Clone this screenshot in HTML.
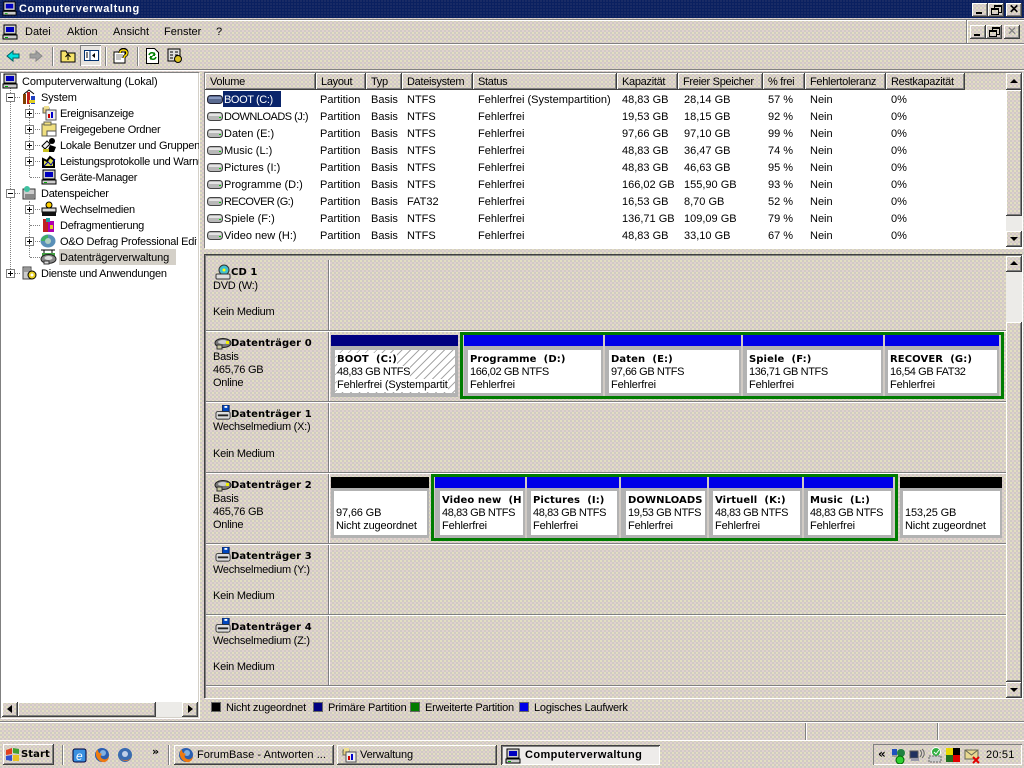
<!DOCTYPE html>
<html><head><meta charset="utf-8"><title>Computerverwaltung</title>
<style>
html,body{margin:0;padding:0;width:1024px;height:768px;overflow:hidden}
body{position:relative;font:11px/13px "Liberation Sans",sans-serif;color:#000;letter-spacing:-.15px;}
.d{background-color:#d0cac4;background-image:radial-gradient(circle at 1px 1px,#f4f0c0 .7px,transparent .9px),radial-gradient(circle at 3px 3px,#f0d8d8 .7px,transparent .9px);background-size:4px 4px,4px 4px}
.a{position:absolute}
.t{position:absolute;white-space:nowrap;margin-top:1px}
.b{font:bold 10px/13px "DejaVu Sans",sans-serif;letter-spacing:.1px}
.up{position:absolute;box-sizing:border-box;box-shadow:inset -1px -1px #404040,inset 1px 1px #fff,inset -2px -2px #808080;}
.th{position:absolute;box-sizing:border-box;top:73px;height:17px;box-shadow:inset -1px -1px #404040,inset 1px 1px #fff,inset -2px -2px #808080;padding:3px 0 0 5px;white-space:nowrap;overflow:hidden;letter-spacing:-.3px}
.r{position:absolute;left:205px;width:800px;height:17px;letter-spacing:0}
.r span{position:absolute;top:3px;white-space:nowrap}
.c1{left:19px}.c2{left:115px}.c3{left:166px}.c4{left:202px}.c5{left:273px}.c6{left:417px}.c7{left:479px}.c8{left:563px}.c9{left:605px}.c10{left:686px}
.r svg{position:absolute;left:2px;top:3px}
.hl{position:absolute;height:1px;background:#808080;box-shadow:0 1px #fff}
.vl{position:absolute;width:1px;background:#808080;box-shadow:1px 0 #fff}
.dh{position:absolute;height:0;border-top:1px dotted #808080}
.dv{position:absolute;width:0;border-left:1px dotted #808080}
.px{position:absolute;box-sizing:border-box;width:9px;height:9px;border:1px solid #808080;background:#fff}
.px:before{content:"";position:absolute;left:1px;top:3px;width:5px;height:1px;background:#000}
.px.p:after{content:"";position:absolute;left:3px;top:1px;width:1px;height:5px;background:#000}
.ph{position:absolute;height:11px}
.pw{position:absolute;box-sizing:border-box;background:#fff;overflow:hidden;white-space:nowrap}
.pf{position:absolute;background:#8a8a8a;background-image:radial-gradient(circle at 1px 1px,#d8d8d8 .7px,transparent .9px);background-size:2px 2px}
.pw i{display:block;font-style:normal;position:absolute;left:2px}
.l1{top:3px}.l2{top:16px;letter-spacing:-.4px}.l3{top:29px}
.g{position:absolute;box-sizing:border-box;border:3px solid #007c00;background:#d0cac4}
.leg{position:absolute;width:10px;height:10px;top:702px;border:1px solid #666;box-sizing:border-box}
.tri{position:absolute;width:0;height:0}
.ts{position:absolute;top:745px;height:20px;box-sizing:border-box;box-shadow:inset -1px -1px #404040,inset 1px 1px #fff,inset -2px -2px #808080;}
.lb{letter-spacing:-.25px}
svg{position:absolute;display:block}
</style></head>
<body class="d">
<svg width="0" height="0" style="left:0;top:0"><defs>
<symbol id="pc" viewBox="0 0 16 16"><rect x="2" y="1" width="12" height="9" fill="#ccc" stroke="#000"/><rect x="4" y="3" width="8" height="5" fill="#0000c0"/><rect x="1" y="11" width="14" height="4" fill="#ccc" stroke="#000"/><rect x="3" y="13" width="3" height="1" fill="#0a0"/></symbol>
<symbol id="dr" viewBox="0 0 16 11"><rect x=".5" y="1.5" width="15" height="8" rx="3" fill="#b8b8b8" stroke="#444"/><rect x="2" y="3" width="12" height="2" fill="#e4e4e4"/><rect x="12" y="6" width="2" height="1" fill="#0c0"/></symbol>
<symbol id="ds" viewBox="0 0 18 14"><ellipse cx="9" cy="6" rx="8" ry="4.5" fill="#777" stroke="#222"/><ellipse cx="9" cy="5" rx="5" ry="2" fill="#ccc"/><rect x="3" y="8" width="5" height="4" fill="#c8c8a0" stroke="#333"/><rect x="12" y="4" width="3" height="3" fill="#ee0"/></symbol>
<symbol id="rm" viewBox="0 0 18 17"><rect x="8" y="0" width="7" height="7" fill="#0048c0" stroke="#002060"/><rect x="10" y="1" width="3" height="2" fill="#fff"/><rect x="1" y="7" width="15" height="8" rx="2" fill="#ddd" stroke="#333"/><rect x="3" y="10" width="11" height="2" fill="#222"/></symbol>
<symbol id="ff" viewBox="0 0 16 16"><circle cx="8" cy="8" r="7" fill="#2a5fb0"/><circle cx="9" cy="6" r="3" fill="#7fb0e0"/><path d="M2 5C1 11 6 16 11 15c3-1 4-4 4-6-1 3-4 4-6 3C6 11 6 8 8 7 6 6 4 6 4 3 3 3 2 4 2 5z" fill="#ee7a10"/></symbol>
<symbol id="fl" viewBox="0 0 16 16"><path d="M2 3h6v5H2z" fill="#e8d080" stroke="#665" /><path d="M3 1h5v3H3z" fill="#f0e090"/><rect x="5" y="5" width="10" height="10" fill="#eee" stroke="#555"/><rect x="7" y="9" width="2" height="4" fill="#c00"/><rect x="10" y="7" width="2" height="6" fill="#00c"/></symbol>
<symbol id="gr" viewBox="0 0 16 16"><path d="M2 14V6l4 2 3-4 4 3v7z" stroke="#000" fill="#dde04a" stroke-width="2"/><path d="M3 13l4-4 3 3 4-6" stroke="#00a" fill="none"/></symbol>
</defs></svg>

<!-- title bar -->
<div class="a" style="left:0;top:0;width:1024px;height:18px;background-color:#0a2060;background-image:radial-gradient(circle at 1px 1px,#26356a .7px,transparent .9px);background-size:3px 3px"></div>
<svg style="left:2px;top:1px" width="15" height="15"><use href="#pc"/></svg>
<div class="t" style="left:19px;top:2px;color:#fff;font-weight:bold;letter-spacing:.6px">Computerverwaltung</div>
<div class="up d" style="left:972px;top:3px;width:16px;height:14px"></div><div class="a" style="left:976px;top:12px;width:6px;height:2px;background:#000"></div>
<div class="up d" style="left:988px;top:3px;width:16px;height:14px"></div><div class="a" style="left:994px;top:5px;width:6px;height:5px;border:1px solid #000;border-top-width:2px"></div><div class="a d" style="left:991px;top:8px;width:6px;height:4px;border:1px solid #000;border-top-width:2px"></div>
<div class="up d" style="left:1006px;top:3px;width:16px;height:14px"></div><div class="t" style="left:1009px;top:2px;font-weight:bold;font-size:12px">✕</div>

<!-- menu -->
<div class="hl" style="left:0;top:19px;width:1024px"></div>
<svg style="left:2px;top:24px" width="16" height="16"><use href="#pc"/></svg>
<div class="t" style="left:25px;top:25px;letter-spacing:0">Datei</div>
<div class="t" style="left:67px;top:25px;letter-spacing:0">Aktion</div>
<div class="t" style="left:113px;top:25px;letter-spacing:0">Ansicht</div>
<div class="t" style="left:164px;top:25px;letter-spacing:0">Fenster</div>
<div class="t" style="left:216px;top:25px">?</div>
<div class="vl" style="left:966px;top:20px;height:23px"></div>
<div class="up d" style="left:970px;top:25px;width:16px;height:14px"></div><div class="a" style="left:974px;top:34px;width:6px;height:2px;background:#000"></div>
<div class="up d" style="left:986px;top:25px;width:16px;height:14px"></div><div class="a" style="left:992px;top:27px;width:6px;height:5px;border:1px solid #000;border-top-width:2px"></div><div class="a d" style="left:989px;top:30px;width:6px;height:4px;border:1px solid #000;border-top-width:2px"></div>
<div class="up d" style="left:1004px;top:25px;width:16px;height:14px"></div><div class="t" style="left:1007px;top:24px;font-size:12px;color:#808080">✕</div>

<!-- toolbar -->
<div class="hl" style="left:0;top:43px;width:1024px"></div>
<svg style="left:6px;top:49px" width="14" height="14"><path d="M1 7l6-5v3h6v4H7v3z" fill="#00e0e0" stroke="#006060"/></svg>
<svg style="left:29px;top:49px" width="14" height="14"><path d="M13 7L7 2v3H1v4h6v3z" fill="#a0a0a0" stroke="#888"/></svg>
<div class="vl" style="left:52px;top:47px;height:19px"></div>
<svg style="left:60px;top:48px" width="16" height="16"><path d="M1 3h5l1 2h8v9H1z" fill="#f6e36a" stroke="#000"/><path d="M8 12V7M5.500 9l2.500-3 2.500 3" stroke="#000" fill="none"/></svg>
<div class="a" style="left:80px;top:45px;width:21px;height:21px;box-sizing:border-box;background:#e6e3df;box-shadow:inset 1px 1px #808080,inset -1px -1px #fff"></div>
<svg style="left:84px;top:50px" width="15" height="12"><rect x=".5" y=".5" width="14" height="10" fill="#fff" stroke="#003070"/><path d="M6 0v11" stroke="#003070"/><path d="M2 3h2M2 5h2M2 7h2" stroke="#000"/><path d="M11 3v5l-3-2.500z" fill="#000"/></svg>
<div class="vl" style="left:105px;top:47px;height:19px"></div>
<svg style="left:113px;top:48px" width="16" height="16"><rect x="1" y="4" width="11" height="11" fill="#fff" stroke="#000"/><path d="M3 7h7M3 9h7M3 11h5" stroke="#888"/><path d="M7 5c0-5 7-5 7 0 0 3-3 2-3 5" stroke="#000" stroke-width="3" fill="none"/><path d="M7 5c0-4 7-4 7 0 0 3-3 2-3 5" stroke="#ffe000" stroke-width="1.500" fill="none"/></svg>
<div class="vl" style="left:137px;top:47px;height:19px"></div>
<svg style="left:146px;top:48px" width="13" height="16"><path d="M.5 .5h8l4 4v11H.5z" fill="#fff" stroke="#000"/><path d="M3 7c1-3 5-3 6 0M10 9c-1 3-5 3-6 0" stroke="#008000" stroke-width="1.500" fill="none"/><path d="M9 4v4H6zM4 12V8h3z" fill="#008000"/></svg>
<svg style="left:167px;top:48px" width="16" height="16"><rect x="1" y="1" width="12" height="12" fill="#ddd" stroke="#000"/><path d="M3 4h3M8 4h3M3 7h3M8 7h3M3 10h3" stroke="#000"/><circle cx="11" cy="11" r="3.500" fill="#d8c020" stroke="#000"/></svg>
<div class="hl" style="left:0;top:69px;width:1024px"></div>

<!-- left pane -->
<div class="a" style="left:0;top:72px;width:199px;height:646px;background:#fff;box-shadow:inset 1px 1px #808080,inset -1px -1px #d4d0c8,1px 1px #fff"></div>
<div class="dv" style="left:10px;top:88px;height:185px"></div>
<div class="dv" style="left:29px;top:105px;height:72px"></div>
<div class="dv" style="left:29px;top:201px;height:56px"></div>
<div class="dh" style="left:11px;top:97px;width:9px"></div>
<div class="dh" style="left:30px;top:113px;width:10px"></div><div class="dh" style="left:30px;top:129px;width:10px"></div><div class="dh" style="left:30px;top:145px;width:10px"></div><div class="dh" style="left:30px;top:161px;width:10px"></div><div class="dh" style="left:30px;top:177px;width:10px"></div>
<div class="dh" style="left:11px;top:193px;width:9px"></div>
<div class="dh" style="left:30px;top:209px;width:10px"></div><div class="dh" style="left:30px;top:225px;width:10px"></div><div class="dh" style="left:30px;top:241px;width:10px"></div><div class="dh" style="left:30px;top:257px;width:10px"></div>
<div class="dh" style="left:11px;top:273px;width:9px"></div>

<div class="px" style="left:6px;top:93px"></div>
<div class="px p" style="left:25px;top:109px"></div><div class="px p" style="left:25px;top:125px"></div><div class="px p" style="left:25px;top:141px"></div><div class="px p" style="left:25px;top:157px"></div>
<div class="px" style="left:6px;top:189px"></div>
<div class="px p" style="left:25px;top:205px"></div><div class="px p" style="left:25px;top:237px"></div>
<div class="px p" style="left:6px;top:269px"></div>

<svg style="left:2px;top:73px" width="16" height="16"><use href="#pc"/></svg>
<svg style="left:21px;top:89px" width="16" height="16"><rect x="2" y="5" width="3" height="10" fill="#804000"/><rect x="6" y="3" width="3" height="12" fill="#c02020"/><rect x="10" y="7" width="4" height="8" fill="#2040c0"/><path d="M3 5l5-4 5 4" stroke="#000" fill="none"/><rect x="8" y="11" width="6" height="3" fill="#e0d020"/></svg>
<svg style="left:41px;top:105px" width="16" height="16"><use href="#fl"/></svg>
<svg style="left:41px;top:121px" width="16" height="16"><rect x="1" y="3" width="14" height="12" fill="#f0e080" stroke="#665"/><rect x="3" y="1" width="7" height="3" fill="#f0e080" stroke="#665"/><rect x="6" y="10" width="9" height="5" fill="#fff" stroke="#555"/></svg>
<svg style="left:41px;top:137px" width="16" height="16"><circle cx="11" cy="4" r="3" fill="#000"/><path d="M6 15l3-7 6 2-2 5z" fill="#000"/><path d="M1 9l5-5 3 3-5 5z" fill="#f0f0f0" stroke="#000"/><rect x="2" y="12" width="6" height="3" fill="#c8c020"/></svg>
<svg style="left:41px;top:153px" width="16" height="16"><use href="#gr"/></svg>
<svg style="left:41px;top:169px" width="16" height="16"><use href="#pc"/></svg>
<svg style="left:21px;top:185px" width="16" height="16"><path d="M2 4h12v10H2z" fill="#ccc" stroke="#333"/><circle cx="6" cy="4" r="3" fill="#40c0a0"/><rect x="4" y="9" width="9" height="4" fill="#888"/></svg>
<svg style="left:41px;top:201px" width="16" height="16"><circle cx="8" cy="4" r="3" fill="#ffd000" stroke="#000"/><rect x="1" y="7" width="14" height="4" fill="#ddd" stroke="#000"/><rect x="1" y="11" width="14" height="4" fill="#111"/></svg>
<svg style="left:41px;top:217px" width="16" height="16"><rect x="2" y="2" width="5" height="13" fill="#c02020"/><rect x="7" y="4" width="6" height="11" fill="#b000b0"/><rect x="5" y="1" width="4" height="4" fill="#20a0a0"/><rect x="9" y="8" width="3" height="4" fill="#e0d020"/></svg>
<svg style="left:40px;top:233px" width="16" height="16"><ellipse cx="8" cy="8" rx="7.500" ry="6.500" fill="#5a90b8"/><circle cx="8" cy="8" r="3" fill="#b0d0c0"/><path d="M1 8a7 6 0 0 1 7-6v3a3 3 0 0 0-3 3z" fill="#40b060"/></svg>
<svg style="left:40px;top:249px" width="17" height="16"><path d="M1 1h14M4 1v4M12 1v4" stroke="#000"/><rect x="2" y="4" width="13" height="3" fill="#40a040"/><ellipse cx="8.500" cy="10" rx="7.500" ry="4.500" fill="#888" stroke="#222"/><ellipse cx="8.500" cy="9" rx="4" ry="2" fill="#ddd"/><rect x="4" y="12" width="5" height="3" fill="#ddd" stroke="#333"/></svg>
<svg style="left:21px;top:265px" width="16" height="16"><rect x="2" y="2" width="8" height="12" fill="#ccc" stroke="#444"/><path d="M3 4h6M3 6h6" stroke="#666"/><circle cx="11" cy="10" r="4" fill="#e8d020" stroke="#000"/><circle cx="11" cy="10" r="1.500" fill="#fff"/></svg>

<div class="t" style="left:22px;top:75px;letter-spacing:-.1px">Computerverwaltung (Lokal)</div>
<div class="t" style="left:41px;top:91px">System</div>
<div class="t" style="left:60px;top:107px;letter-spacing:-.3px">Ereignisanzeige</div>
<div class="t" style="left:60px;top:123px;letter-spacing:-.25px">Freigegebene Ordner</div>
<div class="t" style="left:60px;top:139px;width:139px;overflow:hidden;letter-spacing:-.25px">Lokale Benutzer und Gruppen</div>
<div class="t" style="left:60px;top:155px;width:139px;overflow:hidden;letter-spacing:-.25px">Leistungsprotokolle und Warnungen</div>
<div class="t" style="left:60px;top:171px;letter-spacing:-.25px">Geräte-Manager</div>
<div class="t" style="left:41px;top:187px;letter-spacing:-.25px">Datenspeicher</div>
<div class="t" style="left:60px;top:203px;letter-spacing:-.25px">Wechselmedien</div>
<div class="t" style="left:60px;top:219px;letter-spacing:-.25px">Defragmentierung</div>
<div class="t" style="left:60px;top:235px;width:137px;overflow:hidden;letter-spacing:-.25px">O&amp;O Defrag Professional Edition</div>
<div class="a" style="left:59px;top:249px;width:117px;height:16px;background:#d4d0c8"></div>
<div class="t" style="left:60px;top:251px;letter-spacing:-.1px">Datenträgerverwaltung</div>
<div class="t" style="left:41px;top:267px;letter-spacing:-.25px">Dienste und Anwendungen</div>

<!-- left hscroll -->
<div class="a" style="left:2px;top:702px;width:196px;height:15px;background:#ecebe8"></div>
<div class="up d" style="left:2px;top:702px;width:16px;height:15px"></div><div class="tri" style="left:7px;top:705px;border:4px solid transparent;border-left:0;border-right:5px solid #000"></div>
<div class="up d" style="left:18px;top:702px;width:138px;height:15px"></div>
<div class="up d" style="left:182px;top:702px;width:16px;height:15px"></div><div class="tri" style="left:188px;top:705px;border:4px solid transparent;border-right:0;border-left:5px solid #000"></div>

<!-- upper list -->
<div class="a" style="left:204px;top:72px;width:818px;height:176px;background:#fff;box-shadow:inset 1px 1px #808080,1px 1px #fff"></div>
<div class="a d" style="left:205px;top:73px;width:801px;height:17px"></div>
<div class="th d" style="left:205px;width:111px">Volume</div>
<div class="th d" style="left:316px;width:50px">Layout</div>
<div class="th d" style="left:366px;width:36px">Typ</div>
<div class="th d" style="left:402px;width:71px">Dateisystem</div>
<div class="th d" style="left:473px;width:144px">Status</div>
<div class="th d" style="left:617px;width:61px">Kapazität</div>
<div class="th d" style="left:678px;width:85px">Freier Speicher</div>
<div class="th d" style="left:763px;width:42px">% frei</div>
<div class="th d" style="left:805px;width:81px">Fehlertoleranz</div>
<div class="th d" style="left:886px;width:79px">Restkapazität</div>

<div class="a" style="left:223px;top:91px;width:58px;height:16px;background:#0a246a"></div>
<div class="r" style="top:91px"><svg width="16" height="11"><rect x=".5" y="1.5" width="15" height="8" rx="3" fill="#5a6a90" stroke="#223"/><rect x="2" y="3" width="12" height="2" fill="#8a9ac0"/></svg><span class="c1" style="color:#fff;letter-spacing:-.4px">BOOT (C:)</span><span class="c2">Partition</span><span class="c3">Basis</span><span class="c4">NTFS</span><span class="c5">Fehlerfrei (Systempartition)</span><span class="c6">48,83 GB</span><span class="c7">28,14 GB</span><span class="c8">57 %</span><span class="c9">Nein</span><span class="c10">0%</span></div>
<div class="r" style="top:108px"><svg width="16" height="11"><use href="#dr"/></svg><span class="c1" style="letter-spacing:-.5px">DOWNLOADS (J:)</span><span class="c2">Partition</span><span class="c3">Basis</span><span class="c4">NTFS</span><span class="c5">Fehlerfrei</span><span class="c6">19,53 GB</span><span class="c7">18,15 GB</span><span class="c8">92 %</span><span class="c9">Nein</span><span class="c10">0%</span></div>
<div class="r" style="top:125px"><svg width="16" height="11"><use href="#dr"/></svg><span class="c1">Daten (E:)</span><span class="c2">Partition</span><span class="c3">Basis</span><span class="c4">NTFS</span><span class="c5">Fehlerfrei</span><span class="c6">97,66 GB</span><span class="c7">97,10 GB</span><span class="c8">99 %</span><span class="c9">Nein</span><span class="c10">0%</span></div>
<div class="r" style="top:142px"><svg width="16" height="11"><use href="#dr"/></svg><span class="c1">Music (L:)</span><span class="c2">Partition</span><span class="c3">Basis</span><span class="c4">NTFS</span><span class="c5">Fehlerfrei</span><span class="c6">48,83 GB</span><span class="c7">36,47 GB</span><span class="c8">74 %</span><span class="c9">Nein</span><span class="c10">0%</span></div>
<div class="r" style="top:159px"><svg width="16" height="11"><use href="#dr"/></svg><span class="c1">Pictures (I:)</span><span class="c2">Partition</span><span class="c3">Basis</span><span class="c4">NTFS</span><span class="c5">Fehlerfrei</span><span class="c6">48,83 GB</span><span class="c7">46,63 GB</span><span class="c8">95 %</span><span class="c9">Nein</span><span class="c10">0%</span></div>
<div class="r" style="top:176px"><svg width="16" height="11"><use href="#dr"/></svg><span class="c1">Programme (D:)</span><span class="c2">Partition</span><span class="c3">Basis</span><span class="c4">NTFS</span><span class="c5">Fehlerfrei</span><span class="c6">166,02 GB</span><span class="c7">155,90 GB</span><span class="c8">93 %</span><span class="c9">Nein</span><span class="c10">0%</span></div>
<div class="r" style="top:193px"><svg width="16" height="11"><use href="#dr"/></svg><span class="c1" style="letter-spacing:-.6px">RECOVER (G:)</span><span class="c2">Partition</span><span class="c3">Basis</span><span class="c4">FAT32</span><span class="c5">Fehlerfrei</span><span class="c6">16,53 GB</span><span class="c7">8,70 GB</span><span class="c8">52 %</span><span class="c9">Nein</span><span class="c10">0%</span></div>
<div class="r" style="top:210px"><svg width="16" height="11"><use href="#dr"/></svg><span class="c1">Spiele (F:)</span><span class="c2">Partition</span><span class="c3">Basis</span><span class="c4">NTFS</span><span class="c5">Fehlerfrei</span><span class="c6">136,71 GB</span><span class="c7">109,09 GB</span><span class="c8">79 %</span><span class="c9">Nein</span><span class="c10">0%</span></div>
<div class="r" style="top:227px"><svg width="16" height="11"><use href="#dr"/></svg><span class="c1">Video new (H:)</span><span class="c2">Partition</span><span class="c3">Basis</span><span class="c4">NTFS</span><span class="c5">Fehlerfrei</span><span class="c6">48,83 GB</span><span class="c7">33,10 GB</span><span class="c8">67 %</span><span class="c9">Nein</span><span class="c10">0%</span></div>

<!-- list scrollbar -->
<div class="a" style="left:1006px;top:73px;width:16px;height:174px;background:#ecebe8"></div>
<div class="up d" style="left:1006px;top:73px;width:16px;height:17px"></div><div class="tri" style="left:1010px;top:79px;border:4px solid transparent;border-top:0;border-bottom:4px solid #000"></div>
<div class="up d" style="left:1006px;top:90px;width:16px;height:126px"></div>
<div class="up d" style="left:1006px;top:231px;width:16px;height:16px"></div><div class="tri" style="left:1010px;top:237px;border:4px solid transparent;border-bottom:0;border-top:4px solid #000"></div>

<!-- lower pane -->
<div class="a" style="left:204px;top:254px;width:818px;height:444px;box-shadow:inset 1px 1px #404040,inset 2px 2px #808080,1px 1px #fff"></div>
<div class="vl" style="left:328px;top:260px;height:425px"></div>
<div class="hl" style="left:206px;top:330px;width:800px"></div>
<div class="hl" style="left:206px;top:401px;width:800px"></div>
<div class="hl" style="left:206px;top:472px;width:800px"></div>
<div class="hl" style="left:206px;top:543px;width:800px"></div>
<div class="hl" style="left:206px;top:614px;width:800px"></div>
<div class="hl" style="left:206px;top:685px;width:800px"></div>

<div class="a" style="left:1006px;top:256px;width:16px;height:441px;background:#ecebe8"></div>
<div class="up d" style="left:1006px;top:256px;width:16px;height:16px"></div><div class="tri" style="left:1010px;top:261px;border:4px solid transparent;border-top:0;border-bottom:4px solid #000"></div>
<div class="up d" style="left:1006px;top:322px;width:16px;height:360px"></div>
<div class="up d" style="left:1006px;top:682px;width:16px;height:16px"></div><div class="tri" style="left:1010px;top:688px;border:4px solid transparent;border-bottom:0;border-top:4px solid #000"></div>

<!-- disk labels -->
<svg style="left:215px;top:264px" width="16" height="16"><circle cx="9" cy="6" r="5" fill="#40c0d0" stroke="#333"/><circle cx="9" cy="6" r="1.500" fill="#ff0"/><rect x="1" y="10" width="14" height="5" rx="1" fill="#ddd" stroke="#333"/></svg>
<div class="t b" style="left:231px;top:265px">CD 1</div>
<div class="t lb" style="left:213px;top:279px">DVD (W:)</div>
<div class="t lb" style="left:213px;top:305px">Kein Medium</div>

<svg style="left:214px;top:337px" width="18" height="14"><use href="#ds"/></svg>
<div class="t b" style="left:231px;top:336px">Datenträger 0</div>
<div class="t lb" style="left:213px;top:350px">Basis</div>
<div class="t lb" style="left:213px;top:363px">465,76 GB</div>
<div class="t lb" style="left:213px;top:376px">Online</div>

<svg style="left:215px;top:405px" width="17" height="16"><use href="#rm"/></svg>
<div class="t b" style="left:231px;top:407px">Datenträger 1</div>
<div class="t lb" style="left:213px;top:420px">Wechselmedium (X:)</div>
<div class="t lb" style="left:213px;top:447px">Kein Medium</div>

<svg style="left:214px;top:479px" width="18" height="14"><use href="#ds"/></svg>
<div class="t b" style="left:231px;top:478px">Datenträger 2</div>
<div class="t lb" style="left:213px;top:492px">Basis</div>
<div class="t lb" style="left:213px;top:505px">465,76 GB</div>
<div class="t lb" style="left:213px;top:518px">Online</div>

<svg style="left:215px;top:547px" width="17" height="16"><use href="#rm"/></svg>
<div class="t b" style="left:231px;top:549px">Datenträger 3</div>
<div class="t lb" style="left:213px;top:563px">Wechselmedium (Y:)</div>
<div class="t lb" style="left:213px;top:589px">Kein Medium</div>

<svg style="left:215px;top:618px" width="17" height="16"><use href="#rm"/></svg>
<div class="t b" style="left:231px;top:620px">Datenträger 4</div>
<div class="t lb" style="left:213px;top:634px">Wechselmedium (Z:)</div>
<div class="t lb" style="left:213px;top:660px">Kein Medium</div>

<!-- disk 0 -->
<div class="ph" style="left:331px;top:335px;width:127px;background:#000080"></div>
<div class="pf" style="left:331px;top:346px;width:127px;height:51px"></div>
<div class="pw" style="left:335px;top:350px;width:120px;height:43px;background:repeating-linear-gradient(135deg,#fff 0,#fff 5px,#a8a8a8 5px,#a8a8a8 6px)">
<i class="l1 b" style="background:#fff">BOOT&nbsp; (C:)</i><i class="l2" style="background:#fff">48,83 GB NTFS</i><i class="l3" style="background:#fff">Fehlerfrei (Systempartit</i></div>

<div class="g" style="left:460px;top:332px;width:544px;height:67px"></div>
<div class="ph" style="left:464px;top:335px;width:139px;background:#0000e8"></div>
<div class="pf" style="left:464px;top:346px;width:139px;height:50px"></div>
<div class="pw" style="left:468px;top:350px;width:133px;height:43px"><i class="l1 b">Programme&nbsp; (D:)</i><i class="l2">166,02 GB NTFS</i><i class="l3">Fehlerfrei</i></div>
<div class="ph" style="left:605px;top:335px;width:136px;background:#0000e8"></div>
<div class="pf" style="left:605px;top:346px;width:136px;height:50px"></div>
<div class="pw" style="left:609px;top:350px;width:130px;height:43px"><i class="l1 b">Daten&nbsp; (E:)</i><i class="l2">97,66 GB NTFS</i><i class="l3">Fehlerfrei</i></div>
<div class="ph" style="left:743px;top:335px;width:140px;background:#0000e8"></div>
<div class="pf" style="left:743px;top:346px;width:140px;height:50px"></div>
<div class="pw" style="left:747px;top:350px;width:134px;height:43px"><i class="l1 b">Spiele&nbsp; (F:)</i><i class="l2">136,71 GB NTFS</i><i class="l3">Fehlerfrei</i></div>
<div class="ph" style="left:885px;top:335px;width:114px;background:#0000e8"></div>
<div class="pf" style="left:885px;top:346px;width:114px;height:50px"></div>
<div class="pw" style="left:888px;top:350px;width:109px;height:43px"><i class="l1 b">RECOVER&nbsp; (G:)</i><i class="l2">16,54 GB FAT32</i><i class="l3">Fehlerfrei</i></div>

<!-- disk 2 -->
<div class="ph" style="left:331px;top:477px;width:98px;background:#000"></div>
<div class="pf" style="left:331px;top:488px;width:98px;height:50px"></div>
<div class="pw" style="left:334px;top:491px;width:93px;height:44px"><i class="l2" style="letter-spacing:-.15px">97,66 GB</i><i class="l3">Nicht zugeordnet</i></div>

<div class="g" style="left:431px;top:474px;width:467px;height:67px"></div>
<div class="ph" style="left:435px;top:477px;width:90px;background:#0000e8"></div>
<div class="pf" style="left:435px;top:488px;width:90px;height:50px"></div>
<div class="pw" style="left:440px;top:491px;width:83px;height:44px"><i class="l1 b">Video new&nbsp; (H</i><i class="l2">48,83 GB NTFS</i><i class="l3">Fehlerfrei</i></div>
<div class="ph" style="left:527px;top:477px;width:92px;background:#0000e8"></div>
<div class="pf" style="left:527px;top:488px;width:92px;height:50px"></div>
<div class="pw" style="left:531px;top:491px;width:86px;height:44px"><i class="l1 b">Pictures&nbsp; (I:)</i><i class="l2">48,83 GB NTFS</i><i class="l3">Fehlerfrei</i></div>
<div class="ph" style="left:621px;top:477px;width:86px;background:#0000e8"></div>
<div class="pf" style="left:621px;top:488px;width:86px;height:50px"></div>
<div class="pw" style="left:626px;top:491px;width:79px;height:44px"><i class="l1 b">DOWNLOADS</i><i class="l2">19,53 GB NTFS</i><i class="l3">Fehlerfrei</i></div>
<div class="ph" style="left:709px;top:477px;width:93px;background:#0000e8"></div>
<div class="pf" style="left:709px;top:488px;width:93px;height:50px"></div>
<div class="pw" style="left:713px;top:491px;width:87px;height:44px"><i class="l1 b">Virtuell&nbsp; (K:)</i><i class="l2">48,83 GB NTFS</i><i class="l3">Fehlerfrei</i></div>
<div class="ph" style="left:804px;top:477px;width:89px;background:#0000e8"></div>
<div class="pf" style="left:804px;top:488px;width:89px;height:50px"></div>
<div class="pw" style="left:808px;top:491px;width:83px;height:44px"><i class="l1 b">Music&nbsp; (L:)</i><i class="l2">48,83 GB NTFS</i><i class="l3">Fehlerfrei</i></div>

<div class="ph" style="left:900px;top:477px;width:102px;background:#000"></div>
<div class="pf" style="left:900px;top:488px;width:102px;height:50px"></div>
<div class="pw" style="left:903px;top:491px;width:97px;height:44px"><i class="l2" style="letter-spacing:-.15px">153,25 GB</i><i class="l3">Nicht zugeordnet</i></div>

<!-- legend -->
<div class="leg" style="left:211px;background:#000"></div><div class="t" style="left:226px;top:701px;letter-spacing:-.2px">Nicht zugeordnet</div>
<div class="leg" style="left:313px;background:#000080"></div><div class="t" style="left:328px;top:701px;letter-spacing:-.2px">Primäre Partition</div>
<div class="leg" style="left:410px;background:#007c00"></div><div class="t" style="left:425px;top:701px;letter-spacing:-.2px">Erweiterte Partition</div>
<div class="leg" style="left:519px;background:#0000e8"></div><div class="t" style="left:534px;top:701px;letter-spacing:-.2px">Logisches Laufwerk</div>

<!-- status bar -->
<div class="hl" style="left:0;top:721px;width:1024px"></div>
<div class="vl" style="left:805px;top:723px;height:17px"></div>
<div class="vl" style="left:937px;top:723px;height:17px"></div>
<div class="a" style="left:0;top:740px;width:1024px;height:1px;background:#fff"></div>

<!-- taskbar -->
<div class="ts d" style="left:3px;top:744px;width:51px;height:21px"></div>
<svg style="left:5px;top:747px" width="15" height="15"><path d="M1 3l6-2v6l-6 1z" fill="#e04020"/><path d="M8 1l6 1v5l-6-1z" fill="#40a030"/><path d="M1 9l6-1v6l-6-1z" fill="#3050d0"/><path d="M8 8l6 0v6l-6 0z" fill="#e8c020"/></svg>
<div class="t b" style="left:21px;top:747px;font-size:10px">Start</div>
<div class="vl" style="left:62px;top:745px;height:20px"></div>
<svg style="left:71px;top:747px" width="16" height="16"><rect x="2" y="2" width="13" height="13" rx="2" fill="#3a90e0" stroke="#003"/><text x="5" y="13" font-family="Liberation Sans" font-size="12" font-style="italic" fill="#fff">e</text></svg>
<svg style="left:94px;top:747px" width="16" height="16"><use href="#ff"/></svg>
<svg style="left:117px;top:747px" width="16" height="16"><circle cx="8" cy="8" r="7" fill="#3a6cb0"/><circle cx="8" cy="7" r="3" fill="#c0d0e8"/><path d="M3 11c3 3 8 3 11 0-2 4-8 4-11 0z" fill="#e07020"/></svg>
<div class="t b" style="left:152px;top:744px;font-size:11px">»</div>
<div class="vl" style="left:168px;top:745px;height:20px"></div>

<div class="ts d" style="left:174px;width:160px"></div>
<svg style="left:178px;top:747px" width="16" height="16"><use href="#ff"/></svg>
<div class="t" style="left:197px;top:748px;letter-spacing:.05px">ForumBase - Antworten ...</div>
<div class="ts d" style="left:337px;width:160px"></div>
<svg style="left:341px;top:747px" width="16" height="16"><use href="#fl"/></svg>
<div class="t" style="left:360px;top:748px">Verwaltung</div>
<div class="a" style="left:501px;top:745px;width:159px;height:20px;background:#eeecea;box-shadow:inset 1px 1px #404040,inset -1px -1px #fff,inset 2px 2px #808080"></div>
<svg style="left:505px;top:748px" width="16" height="16"><use href="#pc"/></svg>
<div class="t" style="left:525px;top:748px;font-weight:bold;letter-spacing:.4px">Computerverwaltung</div>

<div class="a" style="left:873px;top:744px;width:149px;height:21px;box-shadow:inset 1px 1px #808080,inset -1px -1px #fff"></div>
<div class="t b" style="left:878px;top:747px;font-size:12px">«</div>
<svg style="left:891px;top:748px" width="16" height="16"><circle cx="10" cy="5" r="4" fill="#208040"/><rect x="1" y="1" width="5" height="6" fill="#2050c0"/><circle cx="9" cy="12" r="4" fill="#30d030" stroke="#060"/><path d="M1 8h5" stroke="#666"/></svg>
<svg style="left:909px;top:748px" width="16" height="14"><rect x="1" y="3" width="8" height="7" fill="#203060" stroke="#555"/><rect x="2" y="10" width="8" height="3" fill="#99a"/><path d="M11 2c2 2 2 5 0 7M13 1c3 3 3 6 0 9" stroke="#666" fill="none"/></svg>
<svg style="left:927px;top:747px" width="16" height="17"><circle cx="9" cy="5" r="4.500" fill="#30b040" stroke="#fff"/><path d="M7 5l2 2 3-4" stroke="#fff" fill="none"/><rect x="2" y="9" width="12" height="6" fill="#ccc" stroke="#666" stroke-dasharray="2 1"/></svg>
<svg style="left:946px;top:748px" width="14" height="14"><rect width="7" height="7" fill="#e8d800"/><rect x="7" width="7" height="7" fill="#000"/><rect y="7" width="7" height="7" fill="#207020"/><rect x="7" y="7" width="7" height="7" fill="#e00000"/></svg>
<svg style="left:964px;top:749px" width="17" height="15"><rect x="1" y="1" width="13" height="9" fill="#e8d890" stroke="#665"/><path d="M1 1l6.500 5L14 1" stroke="#665" fill="none"/><path d="M9 8l6 6M15 8l-6 6" stroke="#e00000" stroke-width="2"/></svg>
<div class="t" style="left:986px;top:748px;letter-spacing:.2px">20:51</div>
</body></html>
